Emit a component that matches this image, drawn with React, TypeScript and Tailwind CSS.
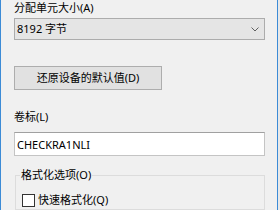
import { useState } from "react";

const font = "font-['Noto_Sans','Noto_Sans_CJK_SC',sans-serif]";

export default function App() {
  const [quick, setQuick] = useState(false);
  const [label, setLabel] = useState("CHECKRA1NLI");

  return (
    <div className={`flex h-[210px] w-[280px] overflow-hidden bg-[#f0f0f0] text-[11px] text-black ${font}`}>
      <div className="w-px shrink-0 bg-[#3c8bd6]" />
      <div className="flex flex-1 flex-col pl-[13px] pr-[12px]">
        <div className="h-[18px] pt-px leading-[13px] whitespace-nowrap">分配单元大小(A)</div>

        <div className="flex h-[22px] items-center justify-between border border-[#acacac] bg-[#e5e5e5] pl-[2px] pr-[5px]">
          <span className="leading-[14px]">8192 字节</span>
          <svg width="8" height="5" viewBox="0 0 8 5" className="text-[#606060]">
            <path d="M0.5 0.5 L4 4 L7.5 0.5" fill="none" stroke="currentColor" strokeWidth="1" />
          </svg>
        </div>

        <button
          type="button"
          className="mt-[26px] flex h-[24px] w-[148px] items-center justify-center border border-[#adadad] bg-[#e1e1e1] leading-[14px]"
        >
          还原设备的默认值(D)
        </button>

        <div className="mt-[20px] leading-[14px]">卷标(L)</div>

        <input
          value={label}
          onChange={(event) => setLabel(event.target.value)}
          className="mt-[8px] h-[24px] w-full border border-[#c4c4c4] border-t-[#a0a0a0] bg-white px-[2px] text-[11px] outline-none"
        />

        <div className="relative mt-[19px] ml-px flex-1 border border-[#dcdcdc] pt-[17px] pl-[6px]">
          <span className="absolute -top-[8px] left-[4px] bg-[#f0f0f0] px-[1px] leading-[14px]">格式化选项(O)</span>
          <label className="flex items-center gap-[3px] leading-[14px]">
            <span
              onClick={() => setQuick(!quick)}
              className="flex h-[13px] w-[13px] items-center justify-center border border-[#333333] bg-white text-[10px]"
            >
              {quick ? "✓" : ""}
            </span>
            快速格式化(Q)
          </label>
        </div>
      </div>
      <div className="w-px shrink-0 bg-[#3c8bd6]" />
      <div className="w-[2px] shrink-0 bg-[#e8e8e8]" />
    </div>
  );
}
